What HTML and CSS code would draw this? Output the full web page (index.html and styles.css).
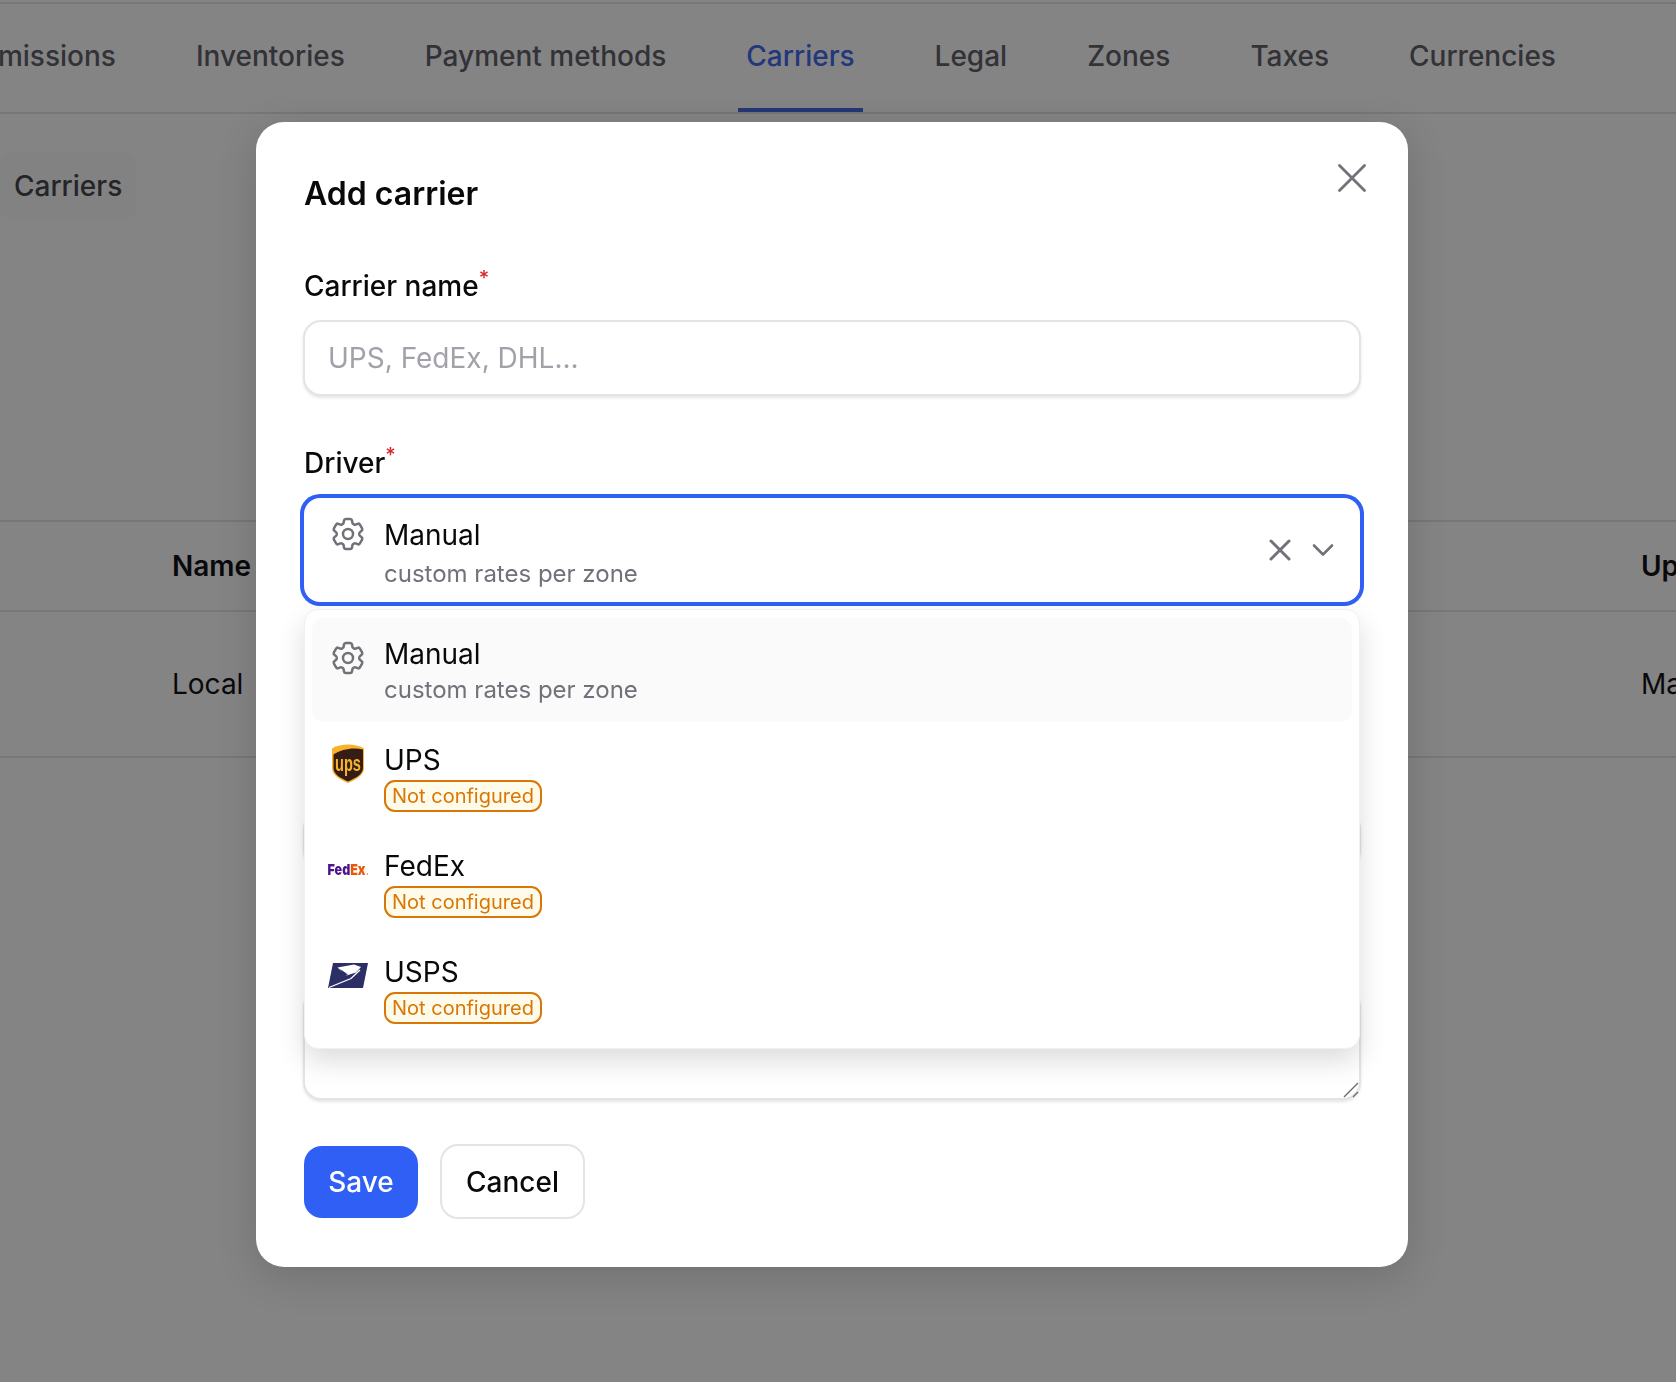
FILE: index.html
```html
<!DOCTYPE html>
<html lang="en">
<head>
<meta charset="utf-8">
<title>Add carrier</title>
<link rel="stylesheet" href="styles.css">
</head>
<body>
<main class="page">
  <nav class="tabs">
    <a class="tab">Permissions</a>
    <a class="tab">Inventories</a>
    <a class="tab">Payment methods</a>
    <a class="tab tab-active">Carriers</a>
    <a class="tab">Legal</a>
    <a class="tab">Zones</a>
    <a class="tab">Taxes</a>
    <a class="tab">Currencies</a>
  </nav>
  <div class="subnav"><span class="pill">Carriers</span></div>
  <section class="table">
    <div class="row row-head"><span class="col-name">Name</span><span>Updated</span></div>
    <div class="row row-body"><span class="col-name">Local</span><span>Manual</span></div>
  </section>
</main>

<div class="overlay">
  <div class="modal">
    <button class="close" aria-label="Close">
      <svg class="close-icon" viewBox="0 0 28 28"><path d="M1.5 1.5l25 25M26.5 1.5l-25 25"/></svg>
    </button>
    <h2 class="title">Add carrier</h2>

    <label class="label label-first">Carrier name<sup class="req">*</sup></label>
    <input class="input" placeholder="UPS, FedEx, DHL...">

    <label class="label label-driver">Driver<sup class="req">*</sup></label>
    <div class="select-wrap">
      <div class="select">
        <svg class="slot gear" viewBox="0 0 24 24"><path d="M9.594 3.94c.09-.542.56-.94 1.11-.94h2.593c.55 0 1.02.398 1.11.94l.213 1.281c.063.374.313.686.645.87.074.04.147.083.22.127.325.196.72.257 1.075.124l1.217-.456a1.125 1.125 0 0 1 1.37.49l1.296 2.247a1.125 1.125 0 0 1-.26 1.431l-1.003.827c-.293.241-.438.613-.43.992a7.723 7.723 0 0 1 0 .255c-.008.378.137.75.43.991l1.004.827c.424.35.534.955.26 1.43l-1.298 2.247a1.125 1.125 0 0 1-1.369.491l-1.217-.456c-.355-.133-.75-.072-1.076.124a6.47 6.47 0 0 1-.22.128c-.331.183-.581.495-.644.869l-.213 1.281c-.09.543-.56.94-1.11.94h-2.594c-.55 0-1.019-.398-1.11-.94l-.213-1.281c-.062-.374-.312-.686-.644-.87a6.52 6.52 0 0 1-.22-.127c-.325-.196-.72-.257-1.076-.124l-1.217.456a1.125 1.125 0 0 1-1.369-.49l-1.297-2.247a1.125 1.125 0 0 1 .26-1.431l1.004-.827c.292-.24.437-.613.43-.991a6.932 6.932 0 0 1 0-.255c.007-.38-.138-.751-.43-.992l-1.004-.827a1.125 1.125 0 0 1-.26-1.43l1.297-2.247a1.125 1.125 0 0 1 1.37-.491l1.216.456c.356.133.751.072 1.076-.124.072-.044.146-.086.22-.128.332-.183.582-.495.644-.869l.214-1.28Z"/><path d="M15 12a3 3 0 1 1-6 0 3 3 0 0 1 6 0Z"/></svg>
        <div class="select-text">
          <div class="opt-name">Manual</div>
          <div class="select-desc">custom rates per zone</div>
        </div>
        <svg class="ctl ctl-x" viewBox="0 0 28 28"><path d="M5 5l18 18M23 5L5 23"/></svg>
        <svg class="ctl" viewBox="0 0 28 28"><path d="M5 9.5l9 9 9-9"/></svg>
      </div>

      <div class="menu">
        <div class="opt opt-active">
          <svg class="slot gear" viewBox="0 0 24 24"><path d="M9.594 3.94c.09-.542.56-.94 1.11-.94h2.593c.55 0 1.02.398 1.11.94l.213 1.281c.063.374.313.686.645.87.074.04.147.083.22.127.325.196.72.257 1.075.124l1.217-.456a1.125 1.125 0 0 1 1.37.49l1.296 2.247a1.125 1.125 0 0 1-.26 1.431l-1.003.827c-.293.241-.438.613-.43.992a7.723 7.723 0 0 1 0 .255c-.008.378.137.75.43.991l1.004.827c.424.35.534.955.26 1.43l-1.298 2.247a1.125 1.125 0 0 1-1.369.491l-1.217-.456c-.355-.133-.75-.072-1.076.124a6.47 6.47 0 0 1-.22.128c-.331.183-.581.495-.644.869l-.213 1.281c-.09.543-.56.94-1.11.94h-2.594c-.55 0-1.019-.398-1.11-.94l-.213-1.281c-.062-.374-.312-.686-.644-.87a6.52 6.52 0 0 1-.22-.127c-.325-.196-.72-.257-1.076-.124l-1.217.456a1.125 1.125 0 0 1-1.369-.49l-1.297-2.247a1.125 1.125 0 0 1 .26-1.431l1.004-.827c.292-.24.437-.613.43-.991a6.932 6.932 0 0 1 0-.255c.007-.38-.138-.751-.43-.992l-1.004-.827a1.125 1.125 0 0 1-.26-1.43l1.297-2.247a1.125 1.125 0 0 1 1.37-.491l1.216.456c.356.133.751.072 1.076-.124.072-.044.146-.086.22-.128.332-.183.582-.495.644-.869l.214-1.28Z"/><path d="M15 12a3 3 0 1 1-6 0 3 3 0 0 1 6 0Z"/></svg>
          <div class="opt-text opt-text-first">
            <div class="opt-name">Manual</div>
            <div class="opt-desc">custom rates per zone</div>
          </div>
        </div>

        <div class="opt">
          <svg class="slot" viewBox="0 0 42 40">
            <path fill="#f7b32b" d="M5 4.500C10 1.500 15 .5 21 .5s11 1 16 4V24c0 7.500-8 11.500-16 15C13 35.500 5 31.500 5 24z"/>
            <path fill="#351c15" d="M6.500 10.500C14 5 27 3 36 5.500V24c0 6.500-7.500 10-15 13.500C13.500 34 6.500 30.500 6.500 24z"/>
            <text class="ups-text" x="21" y="27" textLength="26" lengthAdjust="spacingAndGlyphs">ups</text>
          </svg>
          <div class="opt-text">
            <div class="opt-name">UPS</div>
            <span class="badge">Not configured</span>
          </div>
        </div>

        <div class="opt">
          <svg class="slot" viewBox="0 0 42 40">
            <text class="fedex-text" x="0.500" y="24.500" textLength="38" lengthAdjust="spacingAndGlyphs"><tspan fill="#4d148c">Fed</tspan><tspan fill="#e8590c">Ex</tspan></text>
            <circle cx="40.500" cy="24" r=".7" fill="#e8590c"/>
          </svg>
          <div class="opt-text">
            <div class="opt-name">FedEx</div>
            <span class="badge">Not configured</span>
          </div>
        </div>

        <div class="opt">
          <svg class="slot" viewBox="0 0 42 40">
            <path fill="#2c2e66" d="M6 7h35l-5 25H1z"/>
            <path fill="#fff" d="M10.500 11.500 27 8.500l7 2.500-5 5.500-9.500 3z"/>
            <path fill="#2c2e66" d="M13 13l8 5.500-3.500 1z"/>
            <path fill="none" stroke="#fff" stroke-width="1.300" d="M2 31.500 24 22.500 33 14"/>
          </svg>
          <div class="opt-text">
            <div class="opt-name">USPS</div>
            <span class="badge">Not configured</span>
          </div>
        </div>
      </div>
    </div>

    <input class="input input-behind">
    <div class="textarea-wrap">
      <textarea class="textarea"></textarea>
      <svg class="resizer" viewBox="0 0 16 16"><path d="M1 15 15 1M10 15l5-5"/></svg>
    </div>

    <div class="actions">
      <button class="btn btn-primary">Save</button>
      <button class="btn btn-secondary">Cancel</button>
    </div>
  </div>
</div>
</body>
</html>
```
FILE: styles.css
```css
* { box-sizing: border-box; }
html, body { margin: 0; height: 1382px; overflow: hidden; }
body { font-family: Inter, "Liberation Sans", sans-serif; font-size: 28px; color: #09090b; background: #fff; }

.page { padding-top: 2px; }
.tabs {
  display: flex;
  gap: 64px;
  height: 112px;
  margin-left: -55.5px;
  border-top: 2px solid #e4e4e7;
  border-bottom: 2px solid #e4e4e7;
}
.tab {
  display: flex;
  align-items: center;
  padding: 0 8px;
  height: 108px;
  border-bottom: 4px solid transparent;
  color: #5a5a63;
  white-space: nowrap;
  font-weight: 500;
}
.tab-active { color: #3a64ec; border-bottom-color: #3f66e0; }

.subnav { margin-top: 39px; height: 66px; }
.pill {
  display: inline-flex;
  align-items: center;
  height: 66px;
  padding: 0 14px;
  border-radius: 10px;
  background: #fafafa;
  color: #3f3f46;
  font-weight: 500;
}

.table { margin-top: 301px; border-top: 2px solid #e4e4e7; white-space: nowrap; }
.row { display: flex; align-items: center; padding-left: 172px; border-bottom: 2px solid #e4e4e7; }
.row-head { height: 90px; font-weight: 600; }
.row-body { height: 146px; }
.col-name { width: 1469px; flex: none; }

.overlay {
  position: fixed;
  inset: 0;
  display: flex;
  justify-content: center;
  align-items: flex-start;
  padding: 122px 12px 0 0;
  background: rgba(9, 9, 11, .5);
}
.modal {
  position: relative;
  width: 1152px;
  height: 1145px;
  padding: 48px;
  border-radius: 28px;
  background: #fff;
  box-shadow: 0 10px 40px rgba(0, 0, 0, .15);
}
.close {
  position: absolute;
  top: 42px;
  right: 42px;
  width: 28px;
  height: 28px;
  padding: 0;
  border: 0;
  background: none;
}
.close-icon { display: block; width: 28px; height: 28px; fill: none; stroke: #71717a; stroke-width: 2.8; stroke-linecap: round; }

.title { margin: 0; font-size: 32px; line-height: 47px; font-weight: 600; }
.label { display: block; font-weight: 500; line-height: 42px; }
.label-first { margin-top: 48px; margin-bottom: 13px; }
.label-driver { margin-top: 46px; margin-bottom: 14px; }
.req { color: #dc2626; font-size: 20px; line-height: 0; vertical-align: 11px; }

.input, .textarea {
  display: block;
  width: calc(100% + 2px);
  margin-left: -1px;
  font: inherit;
  color: inherit;
  background: #fff;
  border: 2px solid #e4e4e7;
  border-radius: 18px;
  box-shadow: 0 2px 3px rgba(0, 0, 0, .1);
  outline: none;
}
.input { height: 76px; padding: 0 23px; }
.input::placeholder { color: #a1a1aa; opacity: 1; }
.input-behind { height: 56px; margin-top: 209px; }
.textarea-wrap { position: relative; margin-top: 122px; }
.textarea { height: 111px; resize: none; }
.resizer { position: absolute; right: 1px; bottom: 2px; width: 16px; height: 16px; fill: none; stroke: #6b6b6b; stroke-width: 1.4; }

.select-wrap { position: relative; }
.select {
  display: flex;
  align-items: center;
  height: 104px;
  padding: 0 23px;
  border-radius: 16px;
  box-shadow: 0 0 0 4px #2f5ff5;
}
.select > .slot { align-self: flex-start; margin-top: 16px; }
.select-text { flex: 1; align-self: flex-start; margin: 17px 0 0 15px; }
.select-desc { margin-top: 1px; line-height: 36px; font-size: 24px; color: #71717a; }
.ctl { width: 28px; height: 28px; fill: none; stroke: #71717a; stroke-linecap: round; stroke-linejoin: round; stroke-width: 2.600; }
.ctl-x { margin-right: 15px; stroke-width: 3; }

.slot { display: block; flex: none; width: 42px; height: 40px; }
.gear { fill: none; stroke: #71717a; stroke-width: 1.5; stroke-linecap: round; stroke-linejoin: round; }
.ups-text { fill: #f7b32b; font-family: "Liberation Sans", sans-serif; font-size: 22px; font-weight: 700; text-anchor: middle; }
.fedex-text { font-family: Inter, sans-serif; font-size: 15px; font-weight: 900; }

.menu {
  position: absolute;
  top: calc(100% + 7px);
  left: 0;
  right: 0;
  z-index: 2;
  display: flex;
  flex-direction: column;
  gap: 2px;
  height: 440px;
  padding: 8px 7px;
  border: 1.5px solid #f0f0f1;
  border-radius: 14px;
  background: #fff;
  box-shadow: 0 12px 28px rgba(0, 0, 0, .14);
}
.opt { display: flex; flex: none; height: 104px; padding: 20px 15px 0; border-radius: 12px; }
.opt-active { background: #fafafa; }
.opt-text { margin: -4px 0 0 15px; }
.opt-text-first { margin-top: -4px; }
.opt-name { line-height: 40px; }
.opt-desc { line-height: 31px; font-size: 24px; color: #71717a; }
.badge {
  display: flex;
  align-items: center;
  width: 158px;
  height: 32px;
  padding: 0 6px;
  border: 2px solid #d97706;
  border-radius: 11px;
  background: #fffbeb;
  color: #d97706;
  font-size: 20px;
  white-space: nowrap;
}

.actions { display: flex; align-items: center; gap: 22px; margin-top: 44px; }
.btn { font: inherit; font-weight: 500; border-radius: 18px; }
.btn-primary { width: 114px; height: 72px; border: 0; background: #2f5ff5; color: #fff; }
.btn-secondary { width: 145px; height: 75px; border: 2px solid #e4e4e7; background: #fff; color: #09090b; }
```
